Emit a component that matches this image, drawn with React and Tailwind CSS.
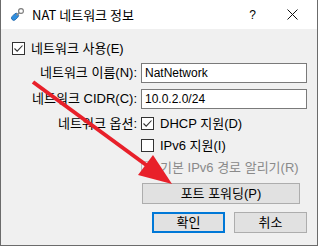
import React from "react";

const font = { fontFamily: '"Liberation Sans", "Noto Sans CJK KR", sans-serif' };

function Check({ checked, disabled }) {
  return (
    <div
      className={
        "w-[13px] h-[13px] border flex items-center justify-center shrink-0 " +
        (disabled ? "border-[#bcbcbc] bg-[#f0f0f0]" : "border-[#333] bg-white")
      }
    >
      {checked && (
        <svg width="11" height="11" viewBox="0 0 11 11">
          <path d="M1.5 5.5 L4.2 8.2 L9.5 2.5" fill="none" stroke="#333" strokeWidth="1.1" />
        </svg>
      )}
    </div>
  );
}

function Btn({ children, primary, className }) {
  return (
    <div
      className={
        "h-[21px] bg-[#e1e1e1] flex items-center justify-center text-[13px] text-black " +
        (primary ? "border-2 border-[#0078d7] " : "border border-[#adadad] ") +
        (className || "")
      }
    >
      {children}
    </div>
  );
}

export default function App() {
  return (
    <div className="w-[319px] h-[246px] bg-white" style={font}>
      <div className="relative w-[318px] h-[246px] border-l border-r border-b border-[#6b6b6b] flex flex-col">
        {/* title bar */}
        <div className="h-[29px] bg-white flex items-center shrink-0">
          <svg className="ml-[9px]" width="15" height="15" viewBox="0 0 15 15">
            <rect x="1" y="7.5" width="8" height="4.6" rx="2.3" transform="rotate(-45 5 9.8)" fill="#2f8fe0" stroke="#1d63a8" strokeWidth="0.8" />
            <path d="M6.5 8.5 L9.5 5.5" stroke="#8a8a8a" strokeWidth="1.6" />
            <circle cx="11" cy="4" r="2.4" fill="white" stroke="#7a7a7a" strokeWidth="1.1" />
          </svg>
          <span className="ml-[7px] text-[13px] text-black" style={{ fontFamily: '"Noto Sans CJK KR", sans-serif' }}>
            NAT 네트워크 정보
          </span>
          <span className="ml-auto text-[12px] text-black mr-[31px]">?</span>
          <svg className="mr-[19px]" width="11" height="11" viewBox="0 0 11 11">
            <path d="M0.5 0.5 L10.5 10.5 M10.5 0.5 L0.5 10.5" stroke="#111" strokeWidth="1" />
          </svg>
        </div>

        {/* client area */}
        <div className="flex-1 bg-[#f0f0f0] flex flex-col text-[13px] text-black">
          <div className="mt-[13px] ml-[11px] flex items-center h-[13px]">
            <Check checked />
            <span className="ml-[6px]">네트워크 사용(E)</span>
          </div>

          <div className="mt-[8px] flex items-center h-[20px]">
            <span className="w-[136px] text-right whitespace-nowrap">네트워크 이름(N):</span>
            <div className="ml-[4px] w-[166px] h-[20px] bg-white border border-[#7a7a7a] flex items-center pl-[3px] text-[12px]">
              NatNetwork
            </div>
          </div>

          <div className="mt-[6px] flex items-center h-[20px]">
            <span className="w-[136px] text-right whitespace-nowrap">네트워크 CIDR(C):</span>
            <div className="ml-[4px] w-[166px] h-[20px] bg-white border border-[#7a7a7a] flex items-center pl-[3px] text-[12px]">
              10.0.2.0/24
            </div>
          </div>

          <div className="mt-[8px] flex items-center h-[13px]">
            <span className="w-[136px] text-right whitespace-nowrap">네트워크 옵션:</span>
            <div className="ml-[4px] flex items-center">
              <Check checked />
              <span className="ml-[6px]">DHCP 지원(D)</span>
            </div>
          </div>

          <div className="mt-[9px] ml-[140px] flex items-center h-[13px]">
            <Check />
            <span className="ml-[6px]">IPv6 지원(I)</span>
          </div>

          <div className="mt-[9px] ml-[140px] flex items-center h-[13px]">
            <Check disabled />
            <span className="ml-[6px] text-[#8a8a8a] whitespace-nowrap">기본 IPv6 경로 알리기(R)</span>
          </div>

          <Btn className="mt-[9px] ml-[141px] w-[158px]">포트 포워딩(P)</Btn>

          <div className="mt-[8px] ml-[151px] flex gap-[9px]">
            <Btn primary className="w-[73px]">확인</Btn>
            <Btn className="w-[73px]">취소</Btn>
          </div>
        </div>

        {/* red annotation arrow */}
        <svg className="absolute left-0 top-0 pointer-events-none" width="318" height="246" viewBox="0 0 318 246">
          <line x1="32" y1="82" x2="150" y2="168.5" stroke="#e8202a" strokeWidth="4" />
          <polygon points="171,184 137,175 152,155" fill="#e8202a" />
        </svg>
      </div>
    </div>
  );
}
